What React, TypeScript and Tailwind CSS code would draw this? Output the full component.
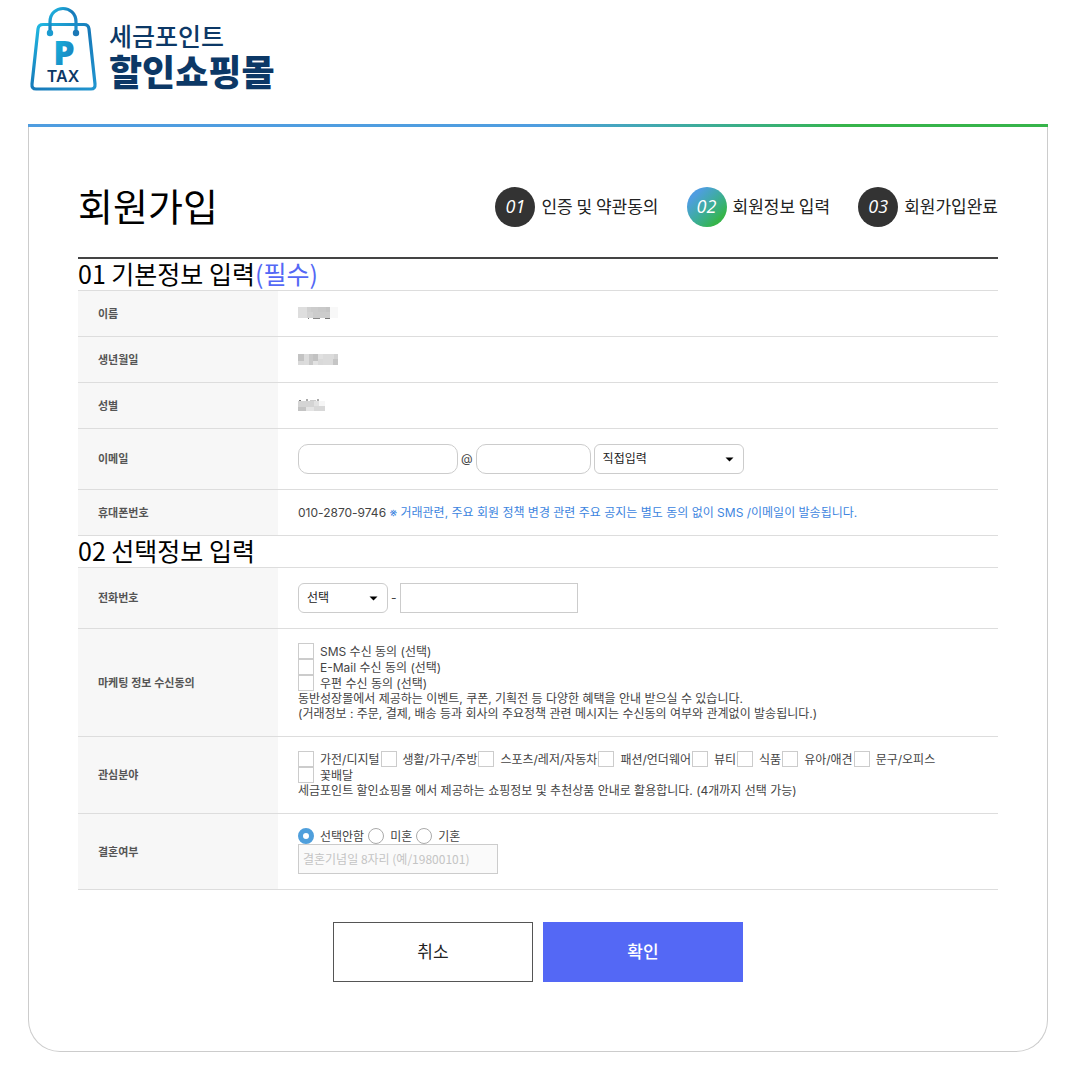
import { useState, type ReactNode } from "react";

const body = "font-['Inter','Noto_Sans_CJK_KR',sans-serif]";
const display = "font-['Noto_Sans_CJK_KR',sans-serif]";

const interests = [
  "가전/디지털",
  "생활/가구/주방",
  "스포츠/레저/자동차",
  "패션/언더웨어",
  "뷰티",
  "식품",
  "유아/애견",
  "문구/오피스",
  "꽃배달",
];

function Logo() {
  return (
    <a href="#" className="flex items-start gap-3 text-[#0c3866]">
      <svg width="67" height="92" viewBox="0 0 67 92" fill="none" aria-hidden="true">
        <defs>
          <linearGradient id="bag" x1="0" y1="0" x2="1" y2="1">
            <stop offset="0" stopColor="#22bfe6" />
            <stop offset="0.5" stopColor="#1678b8" />
            <stop offset="1" stopColor="#2196d0" />
          </linearGradient>
          <linearGradient id="letter" x1="0" y1="0" x2="1" y2="1">
            <stop offset="0" stopColor="#14bde4" />
            <stop offset="1" stopColor="#1b72b4" />
          </linearGradient>
        </defs>
        <path
          d="M13 24.5H54Q58.500 24.500 59 29L65 84Q65.500 89 61 89H6Q1.500 89 2 84L8 29Q8.500 24.500 13 24.500Z"
          stroke="url(#bag)"
          strokeWidth="3.200"
        />
        <path d="M20 32V22C20 4 46 4 46 22V32" stroke="url(#bag)" strokeWidth="3.200" />
        <circle cx="20" cy="33" r="3.200" fill="#1b9bd0" />
        <circle cx="46" cy="33" r="3.200" fill="#1b78b6" />
        <text x="34" y="65" textAnchor="middle" fontFamily="Open Sans" fontWeight="800" fontSize="34" fill="url(#letter)">
          P
        </text>
        <text x="33" y="82" textAnchor="middle" fontFamily="Inter" fontWeight="600" fontSize="16" fill="#0c3866">
          TAX
        </text>
      </svg>
      <span className={`${display} flex flex-col pt-[19px]`}>
        <span className="text-[25px] leading-8 font-medium">세금포인트</span>
        <span className="text-[36px] leading-[38px] font-black">할인쇼핑몰</span>
      </span>
    </a>
  );
}

function Step({ no, label, active }: { no: string; label: string; active?: boolean }) {
  return (
    <li className="flex items-center gap-[6px]" aria-current={active ? "step" : undefined}>
      <span
        className={`flex size-10 items-center justify-center rounded-full pb-px font-['Open_Sans',sans-serif] text-[18px] text-white italic ${
          active ? "bg-linear-135 from-[#4f9de0] from-20% to-[#36b44a] to-80%" : "bg-[#333]"
        }`}
      >
        {no}
      </span>
      <span className={`${display} pb-[2px] text-[17px] text-[#222]`}>{label}</span>
    </li>
  );
}

function Row({ label, htmlFor, size, children }: { label: string; htmlFor?: string; size: string; children: ReactNode }) {
  return (
    <tr className={`border-b border-[#ddd] ${size}`}>
      <th scope="row" className="w-[200px] bg-[#f7f7f7] pt-px pl-5 text-left text-[11px] font-semibold text-[#555]">
        {htmlFor ? <label htmlFor={htmlFor}>{label}</label> : label}
      </th>
      <td className="pb-px pl-5 text-[12px] leading-4 text-[#444]">{children}</td>
    </tr>
  );
}

function Check({ label }: { label: string }) {
  return (
    <label className="inline-flex h-4 items-center gap-[6px]">
      <input type="checkbox" className="size-4 appearance-none border border-[#ccc] bg-white checked:bg-[#4f9fdc]" />
      <span className="pt-[2px]">{label}</span>
    </label>
  );
}

function Pick({ id, label, width, children }: { id: string; label: string; width: string; children: ReactNode }) {
  return (
    <span className={`relative inline-block ${width}`}>
      <select id={id} aria-label={label} className="h-[30px] w-full appearance-none rounded-md border border-[#ccc] bg-white px-2 text-[12px] text-[#222]">
        {children}
      </select>
      <svg className="pointer-events-none absolute top-[13px] right-[10px]" width="9" height="5" viewBox="0 0 9 5" aria-hidden="true">
        <path d="M0.500 0.500H8.500L4.500 4.500Z" fill="#000" />
      </svg>
    </span>
  );
}

type Block = [number, number, number, number, string];

function Masked({ width, height, blocks, label }: { width: number; height: number; blocks: Block[]; label: string }) {
  return (
    <svg width={width} height={height} role="img" aria-label={label} shapeRendering="crispEdges">
      {blocks.map(([x, y, w, h, fill]) => (
        <rect key={`${x}-${y}`} x={x} y={y} width={w} height={h} fill={fill} />
      ))}
    </svg>
  );
}

const nameBlocks: Block[] = [
  [0, 0, 9, 11, "#dedede"],
  [9, 0, 4, 6, "#d0d0d0"],
  [13, 0, 7, 5, "#cccccc"],
  [20, 0, 8, 5, "#c9c9c9"],
  [28, 0, 4, 5, "#c5c5c5"],
  [9, 5, 6, 6, "#d3d3d3"],
  [15, 5, 17, 6, "#cccccc"],
  [32, 0, 8, 11, "#f8f8f8"],
  [10, 11, 1, 1, "#777777"],
  [15, 11, 7, 1, "#888888"],
  [27, 11, 5, 1, "#777777"],
];

const birthBlocks: Block[] = [
  [0, 0, 6, 7, "#c3c3c3"],
  [0, 7, 6, 4, "#dadada"],
  [6, 0, 5, 11, "#dcdcdc"],
  [11, 0, 4, 11, "#c9c9c9"],
  [15, 0, 5, 7, "#c2c2c2"],
  [15, 7, 5, 4, "#e2e2e2"],
  [20, 0, 5, 5, "#e0e0e0"],
  [20, 5, 5, 6, "#d9d9d9"],
  [25, 0, 11, 11, "#dbdbdb"],
  [36, 0, 4, 5, "#d2d2d2"],
  [35, 5, 5, 6, "#c5c5c5"],
];

const genderBlocks: Block[] = [
  [1, 1, 2, 1, "#777777"],
  [8, 0, 2, 2, "#aaaaaa"],
  [12, 1, 6, 1, "#cccccc"],
  [19, 0, 2, 2, "#aaaaaa"],
  [0, 2, 16, 6, "#d4d4d4"],
  [16, 2, 5, 5, "#e2e2e2"],
  [21, 2, 6, 5, "#f6f6f6"],
  [0, 8, 8, 4, "#c4c4c4"],
  [8, 8, 8, 4, "#e4e4e4"],
  [16, 7, 11, 5, "#d8d8d8"],
];

const field = "h-[30px] border border-[#ccc] bg-white px-2";

export default function App() {
  const [marital, setMarital] = useState("선택안함");

  return (
    <div className={`${body} bg-white pr-[27px] pl-7 text-black`}>
      <header className="flex h-[124px] items-start pl-[2px]">
        <Logo />
      </header>

      <div className="h-[3px] bg-linear-to-r from-[#4f9de0] from-50% to-[#36b44a] to-80%" />
      <main className="mb-5 rounded-b-[32px] border border-t-0 border-[#ccc] px-[49px] pt-[60px] pb-[69px]">
        <div className="flex h-[72px] items-start justify-between border-b-2 border-[#444]">
          <h1 className={`${display} text-[38px] leading-9`}>회원가입</h1>
          <ol className="flex gap-7">
            <Step no="01" label="인증 및 약관동의" />
            <Step no="02" label="회원정보 입력" active />
            <Step no="03" label="회원가입완료" />
          </ol>
        </div>

        <form onSubmit={(e) => e.preventDefault()}>
          <h2 className={`${display} h-[31px] text-[25px] leading-[29px]`}>
            01 기본정보 입력<span className="text-[#5468f5]">(필수)</span>
          </h2>
          <table className="w-full border-collapse border-t border-[#ddd]">
            <tbody>
              <Row label="이름" size="h-[46px]">
                <Masked width={40} height={12} blocks={nameBlocks} label="이름" />
              </Row>
              <Row label="생년월일" size="h-[46px]">
                <Masked width={40} height={11} blocks={birthBlocks} label="생년월일" />
              </Row>
              <Row label="성별" size="h-[46px]">
                <Masked width={27} height={12} blocks={genderBlocks} label="성별" />
              </Row>
              <Row label="이메일" htmlFor="email" size="h-[61px]">
                <div className="flex items-center gap-[3px]">
                  <input id="email" type="text" className={`${field} w-40 rounded-[10px]`} />
                  <span>@</span>
                  <input type="text" aria-label="이메일 도메인" className={`${field} w-[115px] rounded-[10px]`} />
                  <Pick id="domain" label="이메일 도메인 선택" width="w-[150px]">
                    <option>직접입력</option>
                  </Pick>
                </div>
              </Row>
              <Row label="휴대폰번호" size="h-[46px]">
                <p className="pt-[2px]">
                  010-2870-9746{" "}
                  <span className="text-[#3d85e0]">
                    ※ 거래관련, 주요 회원 정책 변경 관련 주요 공지는 별도 동의 없이 SMS /이메일이 발송됩니다.
                  </span>
                </p>
              </Row>
            </tbody>
          </table>

          <h2 className={`${display} h-[31px] text-[25px] leading-[29px]`}>02 선택정보 입력</h2>
          <table className="w-full border-collapse border-t border-[#ddd]">
            <tbody>
              <Row label="전화번호" htmlFor="phone" size="h-[61px]">
                <div className="flex items-center gap-[3px]">
                  <Pick id="area" label="지역번호" width="w-[90px]">
                    <option>선택</option>
                  </Pick>
                  <span>-</span>
                  <input id="phone" type="tel" className={`${field} w-[178px]`} />
                </div>
              </Row>
              <Row label="마케팅 정보 수신동의" size="h-[108px]">
                <div className="flex flex-col items-start">
                  <Check label="SMS 수신 동의 (선택)" />
                  <Check label="E-Mail 수신 동의 (선택)" />
                  <Check label="우편 수신 동의 (선택)" />
                </div>
                <p className="leading-[15px]">동반성장몰에서 제공하는 이벤트, 쿠폰, 기획전 등 다양한 혜택을 안내 받으실 수 있습니다.</p>
                <p className="leading-[15px]">(거래정보 : 주문, 결제, 배송 등과 회사의 주요정책 관련 메시지는 수신동의 여부와 관계없이 발송됩니다.)</p>
              </Row>
              <Row label="관심분야" size="h-[77px]">
                <div className="flex flex-wrap gap-x-px pr-12">
                  {interests.map((name) => (
                    <Check key={name} label={name} />
                  ))}
                </div>
                <p className="leading-[15px]">세금포인트 할인쇼핑몰 에서 제공하는 쇼핑정보 및 추천상품 안내로 활용합니다. (4개까지 선택 가능)</p>
              </Row>
              <Row label="결혼여부" size="h-[76px]">
                <div className="flex gap-1">
                  {["선택안함", "미혼", "기혼"].map((name) => (
                    <label key={name} className="flex h-4 items-center gap-[6px]">
                      <input
                        type="radio"
                        name="marital"
                        checked={marital === name}
                        onChange={() => setMarital(name)}
                        className="size-4 appearance-none rounded-full border border-[#aaa] bg-white checked:border-5 checked:border-[#4f9fdc]"
                      />
                      <span className="pt-[2px]">{name}</span>
                    </label>
                  ))}
                </div>
                <input
                  type="text"
                  disabled
                  aria-label="결혼기념일"
                  placeholder="결혼기념일 8자리 (예/19800101)"
                  className={`${display} block h-[30px] w-[200px] border border-[#ccc] bg-[#fafafa] px-1 pb-[2px] placeholder:text-[#c4c4c4]`}
                />
              </Row>
            </tbody>
          </table>

          <div className={`${display} mt-8 flex justify-center gap-[10px] text-[17px]`}>
            <button type="button" className="h-[60px] w-[200px] border border-[#555] bg-white pb-[2px] text-[#222]">
              취소
            </button>
            <button type="submit" className="h-[60px] w-[200px] bg-[#5468f5] pb-[2px] font-medium text-white">
              확인
            </button>
          </div>
        </form>
      </main>
    </div>
  );
}
